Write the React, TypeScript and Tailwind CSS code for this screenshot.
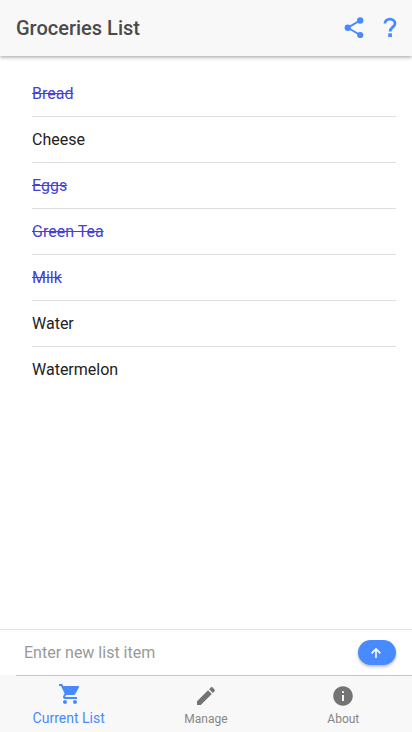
import { useState } from 'react';
import { IoMdCreate, IoMdInformationCircle } from 'react-icons/io';
import { MdShoppingCart } from 'react-icons/md';

const initialItems = [
  { name: 'Bread', done: true },
  { name: 'Cheese', done: false },
  { name: 'Eggs', done: true },
  { name: 'Green Tea', done: true },
  { name: 'Milk', done: true },
  { name: 'Water', done: false },
  { name: 'Watermelon', done: false },
];

const tabs = [
  { id: 'list', label: 'Current List', icon: MdShoppingCart, iconClass: 'ml-0.5 size-6' },
  { id: 'manage', label: 'Manage', icon: IoMdCreate, iconClass: 'size-6' },
  { id: 'about', label: 'About', icon: IoMdInformationCircle, iconClass: 'size-6' },
];

function ShareIcon() {
  return (
    <svg viewBox="0 0 24 24" className="size-6" fill="currentColor">
      <path d="M18.2 4.4 5.8 11.7l12.4 7.3" fill="none" stroke="currentColor" strokeWidth="1.9" />
      <circle cx="18.2" cy="4.5" r="3.2" />
      <circle cx="5.8" cy="11.7" r="3.2" />
      <circle cx="18.2" cy="19" r="3.1" />
    </svg>
  );
}

function HelpIcon() {
  return (
    <svg viewBox="0 0 24 24" className="size-6" fill="currentColor">
      <path
        d="M6.9 7.6c0-2.8 2.2-4.5 5-4.5s5.1 1.7 5.1 4.4c0 3.5-4.9 3.8-4.9 8"
        fill="none"
        stroke="currentColor"
        strokeWidth="2.8"
      />
      <path d="M10.2 17.3h3.7V21h-3.7z" />
    </svg>
  );
}

export default function App() {
  const [items, setItems] = useState(initialItems);
  const [text, setText] = useState('');
  const [activeTab, setActiveTab] = useState('list');

  const toggleItem = (name: string) => {
    setItems(items.map((item) => (item.name === name ? { ...item, done: !item.done } : item)));
  };

  const addItem = () => {
    if (!text.trim()) return;
    setItems([...items, { name: text.trim(), done: false }]);
    setText('');
  };

  return (
    <div className="flex h-screen flex-col bg-white font-[Roboto,sans-serif]">
      {/* Header */}
      <header className="flex h-14 shrink-0 items-center justify-between bg-[#f8f8f8] pl-4 pr-1 shadow-[0_1px_4px_rgba(0,0,0,0.4)]">
        <h1 className="text-xl font-medium text-[#4a4a4a]">Groceries List</h1>
        <div className="flex text-[#488aff]">
          <button className="flex w-9 justify-center" aria-label="Share">
            <ShareIcon />
          </button>
          <button className="flex w-9 justify-center" aria-label="Help">
            <HelpIcon />
          </button>
        </div>
      </header>

      {/* Items */}
      <main className="flex-1 overflow-y-auto px-4 pt-[15px]">
        <ul className="pl-4">
          {items.map((item) => (
            <li
              key={item.name}
              onClick={() => toggleItem(item.name)}
              className="flex h-[46px] items-center border-b border-[#dedede] text-base last:border-b-0"
            >
              <span className={item.done ? 'text-[#4640d4] line-through' : 'text-[#222]'}>
                {item.name}
              </span>
            </li>
          ))}
        </ul>
      </main>

      {/* New item */}
      <div className="flex h-[46px] shrink-0 border-t border-[#e4e4e4] pl-4">
        <div className="flex flex-1 items-center pl-2 pr-4">
          <input
            value={text}
            onChange={(e) => setText(e.target.value)}
            placeholder="Enter new list item"
            className="min-w-0 flex-1 pt-px text-base outline-none placeholder:text-[#999]"
          />
          <button
            onClick={addItem}
            aria-label="Add"
            className="flex h-[25px] w-[38px] items-center justify-center rounded-full bg-[#488aff] pr-0.5 text-white shadow-[0_2px_3px_rgba(0,0,0,0.25)]"
          >
            <svg
              viewBox="0 0 12 12"
              className="size-3"
              fill="none"
              stroke="currentColor"
              strokeWidth="1.6"
            >
              <path d="M6 11V2.2M1.6 6.4 6 2l4.4 4.4" />
            </svg>
          </button>
        </div>
      </div>

      {/* Tabs */}
      <nav className="flex h-[57px] shrink-0 flex-col bg-[#f8f8f8]">
        <div className="ml-4 h-px bg-[#c4c4c4]" />
        <div className="flex flex-1">
          {tabs.map((tab) => {
            const Icon = tab.icon;
            const isActive = tab.id === activeTab;

            return (
              <button
                key={tab.id}
                onClick={() => setActiveTab(tab.id)}
                className={`flex flex-1 flex-col items-center ${
                  isActive ? 'pt-[6px] text-sm text-[#488aff]' : 'pt-2 text-xs text-[#747474]'
                }`}
              >
                <Icon className={tab.iconClass} />
                <span
                  className={isActive ? 'mt-[2px] leading-5' : 'mt-[3px] leading-4 text-[#868686]'}
                >
                  {tab.label}
                </span>
              </button>
            );
          })}
        </div>
      </nav>
    </div>
  );
}
